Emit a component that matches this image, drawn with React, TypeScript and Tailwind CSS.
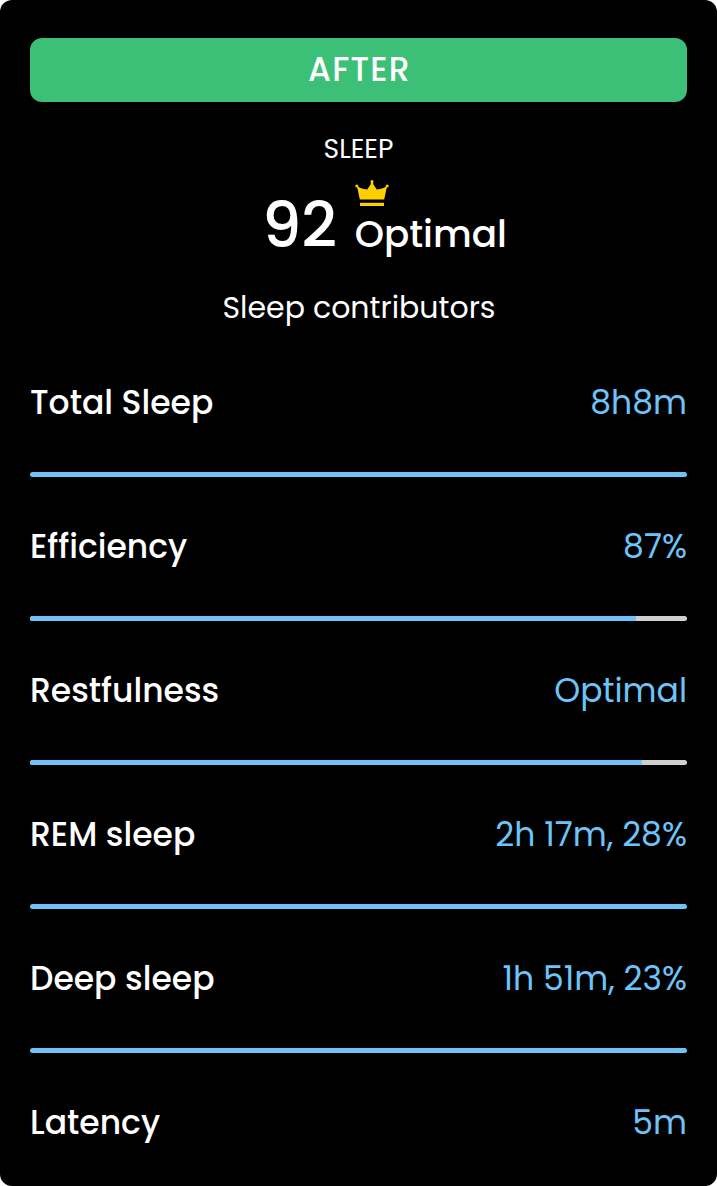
const rows = [
  { label: "Total Sleep", value: "8h8m", fill: 657 },
  { label: "Efficiency", value: "87%", fill: 606 },
  { label: "Restfulness", value: "Optimal", fill: 612 },
  { label: "REM sleep", value: "2h 17m, 28%", fill: 657 },
  { label: "Deep sleep", value: "1h 51m, 23%", fill: 657 },
  { label: "Latency", value: "5m", fill: 0 },
];

function Crown() {
  return (
    <svg className="block" width="34" height="27" viewBox="0 0 34 27" fill="#ffd000">
      <path d="M2 6.3L5.5 7.9Q9 9.3 12.2 9.4L15.6 4.5L16.2 1.5H17.8L18.4 4.5L21.8 9.4Q25 9.3 28.5 7.9L32 6.3L29.2 19.4H4.8Z" />
      <circle cx="1.9" cy="6" r="1.5" />
      <circle cx="17" cy="1.6" r="1.5" />
      <circle cx="32.1" cy="6" r="1.5" />
      <path d="M5 22.8H29V26H5Z" />
    </svg>
  );
}

export default function App() {
  return (
    <div className="h-[1186px] w-[717px] bg-white font-['Poppins','Inter',sans-serif] text-white">
      <div className="h-full overflow-hidden rounded-[12px] bg-black px-[30px] pt-[38px]">
        <div className="h-16 rounded-[12px] bg-[#3cc077] pt-2 pl-0.5 text-center text-[33px] leading-[47px] font-medium tracking-[1.2px]">
          <span>AFTER</span>
        </div>
        <div className="mt-[29px] text-center text-[26.6px] leading-[35px]"><span>SLEEP</span></div>
        <div className="flex h-[95px] pl-[232px]">
          <span className="pt-7 text-[62px] leading-[63px] font-medium">92</span>
          <div className="ml-[17.5px] pt-[14px]">
            <Crown />
            <span className="block text-[37.3px] leading-[54px] font-medium">Optimal</span>
          </div>
        </div>
        <div className="mt-[25px] pl-px text-center text-[30px] leading-[43px]"><span>Sleep contributors</span></div>
        <div className="mt-[33px]">
          {rows.map((r) => (
            <div key={r.label} className="h-[144px]">
              <div className="flex h-[82px] items-start justify-between pt-[17px] text-[33px] leading-[47px]">
                <span className="font-medium">{r.label}</span>
                <span className="text-[#6cc4f8]">{r.value}</span>
              </div>
              {r.fill > 0 && (
                <div className="mt-7 h-[5px] overflow-hidden rounded-full bg-[#d0d0d0]">
                  <div className="h-full bg-[#6cc4f8]" style={{ width: r.fill }} />
                </div>
              )}
            </div>
          ))}
        </div>
      </div>
    </div>
  );
}
